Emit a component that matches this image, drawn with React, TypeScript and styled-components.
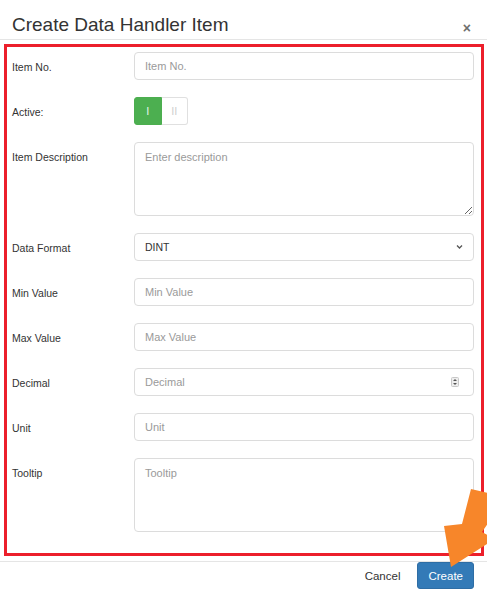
import React from 'react';
import styled, { createGlobalStyle } from 'styled-components';

const GlobalStyle = createGlobalStyle`
    body {
        margin: 0;
        background: #fff;
        font-family: "Liberation Sans", Arial, sans-serif;
        color: #333;
    }
`;

const Page = styled.div`
    position: relative;
    width: 487px;
    height: 600px;
    overflow: hidden;
    background: #fff;
`;

const Header = styled.div`
    display: flex;
    align-items: flex-start;
    justify-content: space-between;
    padding: 14px 12px 3px 12px;
    border-bottom: 1px solid #e5e5e5;
`;

const Title = styled.h4`
    margin: 0;
    font-size: 19px;
    line-height: 22px;
    font-weight: normal;
    color: #333;
`;

const Close = styled.button`
    border: 0;
    background: none;
    padding: 0;
    margin: 7px 4px 0 0;
    font-family: "Liberation Sans", Arial, sans-serif;
    font-size: 14px;
    line-height: 15px;
    font-weight: bold;
    color: #555;
    opacity: 0.85;
`;

const Body = styled.div`
    margin: 4px 3px 0 4px;
    border: 3px solid #ec1f2b;
    padding: 5px 7px 21px 5px;
    display: flex;
    flex-direction: column;
    gap: 17px;
`;

const Row = styled.div`
    display: grid;
    grid-template-columns: 122px 1fr;
    align-items: start;
`;

const Label = styled.label`
    padding-top: 8px;
    font-size: 10.5px;
    line-height: 14px;
    color: #333;
`;

const fieldCss = `
    box-sizing: border-box;
    width: 100%;
    border: 1px solid #dcdcdc;
    border-radius: 4px;
    background: #fff;
    font-family: "Liberation Sans", Arial, sans-serif;
    font-size: 11px;
    color: #333;
    outline: none;
    &::placeholder { color: #9a9a9a; }
`;

const Input = styled.input`
    ${fieldCss}
    height: 28px;
    padding: 0 10px;
`;

const TextArea = styled.textarea`
    ${fieldCss}
    height: 74px;
    padding: 6px 10px;
    line-height: 16px;
    resize: vertical;
    display: block;
`;

const FieldWrap = styled.div`
    position: relative;
`;

const Select = styled.select`
    ${fieldCss}
    height: 28px;
    padding: 0 10px;
    appearance: none;
    font-size: 10.5px;
`;

const Adornment = styled.span<{ $right: number }>`
    position: absolute;
    right: ${p => p.$right}px;
    top: 50%;
    transform: translateY(-50%);
    display: flex;
    pointer-events: none;
`;

const Toggle = styled.div`
    display: flex;
    width: 54px;
    height: 28px;
`;

const ToggleHalf = styled.span<{ $on?: boolean }>`
    flex: 1;
    display: flex;
    align-items: center;
    justify-content: center;
    font-size: 11px;
    box-sizing: border-box;
    border: 1px solid ${p => (p.$on ? '#4cae4f' : '#e0e0e0')};
    border-left-width: ${p => (p.$on ? '1px' : '0')};
    background: ${p => (p.$on ? '#4caf50' : '#fff')};
    color: ${p => (p.$on ? '#e6f4e6' : '#cfcfcf')};
    border-radius: ${p => (p.$on ? '3px 0 0 3px' : '0 3px 3px 0')};
`;

const Footer = styled.div`
    margin-top: 5px;
    border-top: 1px solid #e5e5e5;
    display: flex;
    justify-content: flex-end;
    gap: 6px;
    padding: 0 13px 0 0;
`;

const Button = styled.button<{ $primary?: boolean }>`
    height: 27px;
    padding: 0 10px;
    border-radius: 3px;
    font-family: "Liberation Sans", Arial, sans-serif;
    font-size: 11.5px;
    border: 1px solid ${p => (p.$primary ? '#2e6da4' : 'transparent')};
    background: ${p => (p.$primary ? '#337ab7' : 'transparent')};
    color: ${p => (p.$primary ? '#fff' : '#333')};
`;

const Arrow = styled.svg`
    position: absolute;
    left: 0;
    top: 0;
    pointer-events: none;
`;

const Chevron = () => (
    <svg width="7" height="5" viewBox="0 0 7 5">
        <path d="M1 1 L3.5 3.5 L6 1" fill="none" stroke="#555" strokeWidth="1.3" />
    </svg>
);

const Spinner = () => (
    <svg width="8" height="10" viewBox="0 0 8 10">
        <rect x="0.5" y="0.5" width="7" height="9" rx="1" fill="#eee" stroke="#c8c8c8" />
        <path d="M2 4 L4 2 L6 4 Z" fill="#555" />
        <path d="M2 6 L4 8 L6 6 Z" fill="#555" />
    </svg>
);

const App = () => {
    return (
        <Page>
            <GlobalStyle />
            <Header>
                <Title>Create Data Handler Item</Title>
                <Close>×</Close>
            </Header>
            <Body>
                <Row>
                    <Label>Item No.</Label>
                    <Input placeholder="Item No." />
                </Row>
                <Row>
                    <Label>Active:</Label>
                    <Toggle>
                        <ToggleHalf $on>I</ToggleHalf>
                        <ToggleHalf>II</ToggleHalf>
                    </Toggle>
                </Row>
                <Row>
                    <Label>Item Description</Label>
                    <TextArea placeholder="Enter description" />
                </Row>
                <Row>
                    <Label>Data Format</Label>
                    <FieldWrap>
                        <Select defaultValue="DINT">
                            <option>DINT</option>
                        </Select>
                        <Adornment $right={11}>
                            <Chevron />
                        </Adornment>
                    </FieldWrap>
                </Row>
                <Row>
                    <Label>Min Value</Label>
                    <Input placeholder="Min Value" />
                </Row>
                <Row>
                    <Label>Max Value</Label>
                    <Input placeholder="Max Value" />
                </Row>
                <Row>
                    <Label>Decimal</Label>
                    <FieldWrap>
                        <Input placeholder="Decimal" />
                        <Adornment $right={15}>
                            <Spinner />
                        </Adornment>
                    </FieldWrap>
                </Row>
                <Row>
                    <Label>Unit</Label>
                    <Input placeholder="Unit" />
                </Row>
                <Row>
                    <Label>Tooltip</Label>
                    <TextArea placeholder="Tooltip" />
                </Row>
            </Body>
            <Footer>
                <Button>Cancel</Button>
                <Button $primary>Create</Button>
            </Footer>
            <Arrow width="487" height="600" viewBox="0 0 487 600">
                <polygon
                    points="471,489 506,497 482,532 495,539 451,567 444,526 462,524"
                    fill="#f7862a"
                />
            </Arrow>
        </Page>
    );
};

export default App;
